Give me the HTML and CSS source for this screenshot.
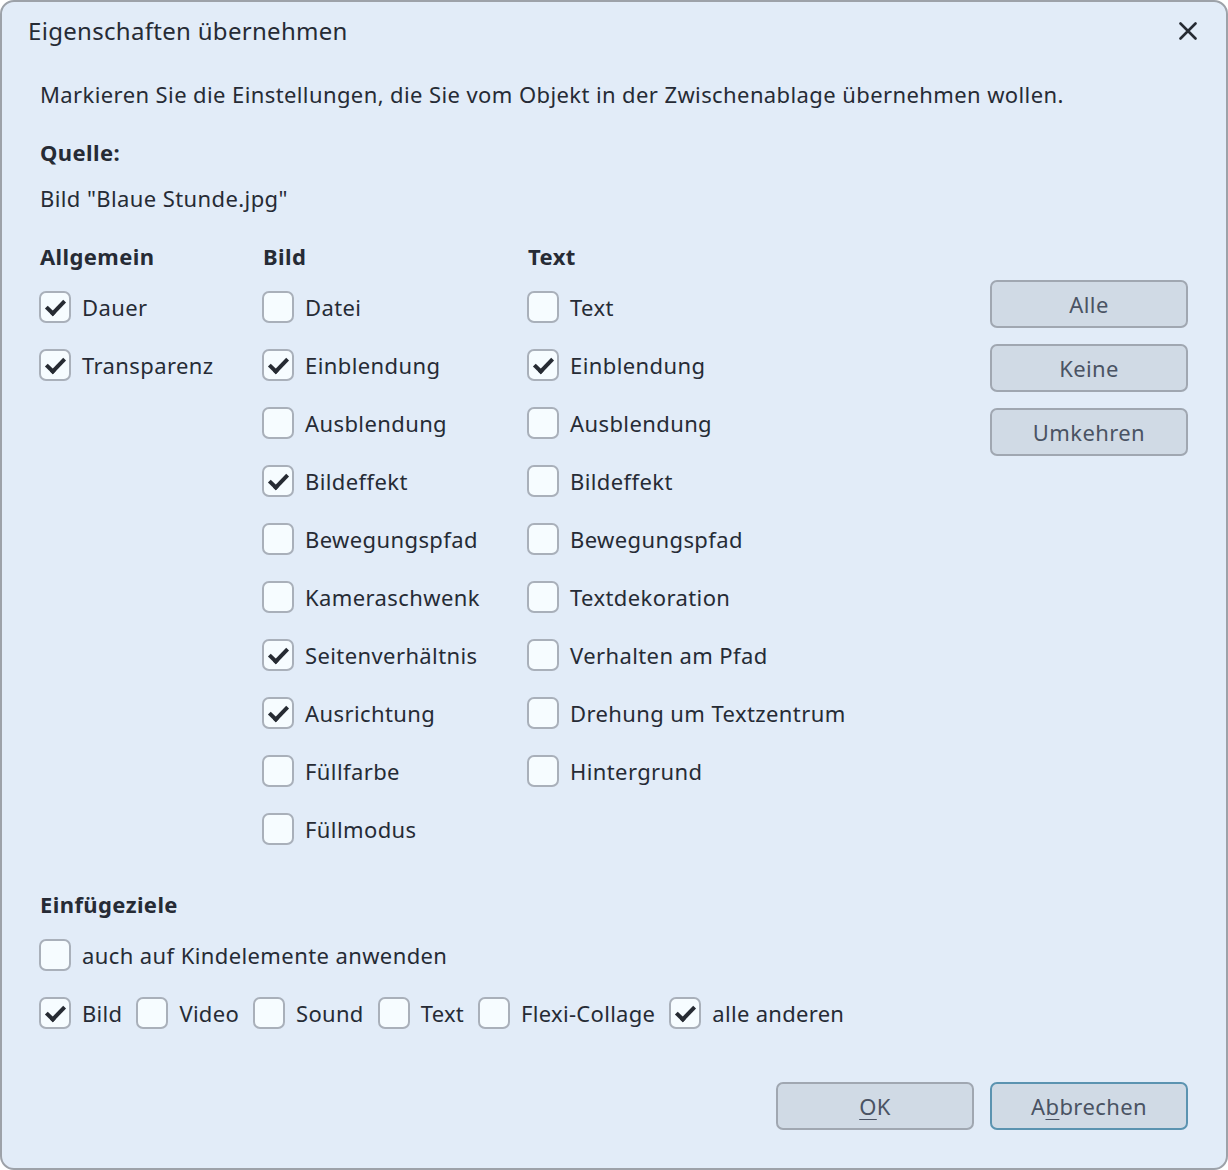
FILE: index.html
```html
<!DOCTYPE html>
<html lang="de">
<head>
<meta charset="utf-8">
<title>Eigenschaften übernehmen</title>
<link rel="stylesheet" href="styles.css">
</head>
<body>
<div class="dialog">
  <div class="titlebar">
    <span class="title">Eigenschaften übernehmen</span>
    <span class="close"><svg width="18" height="18" viewBox="0 0 18 18"><path d="M1.5 1.5 L16.5 16.5 M16.5 1.5 L1.5 16.5" stroke="#262b33" stroke-width="2.6" stroke-linecap="round"/></svg></span>
  </div>
  <div class="content">
    <p class="intro">Markieren Sie die Einstellungen, die Sie vom Objekt in der Zwischenablage übernehmen wollen.</p>
    <p class="label-bold quelle">Quelle:</p>
    <p class="source">Bild "Blaue Stunde.jpg"</p>

    <div class="grid">
      <div class="col">
        <div class="col-head">Allgemein</div>
        <div class="list">
          <label class="cb"><span class="box on"></span>Dauer</label>
          <label class="cb"><span class="box on"></span>Transparenz</label>
        </div>
      </div>
      <div class="col">
        <div class="col-head">Bild</div>
        <div class="list">
          <label class="cb"><span class="box"></span>Datei</label>
          <label class="cb"><span class="box on"></span>Einblendung</label>
          <label class="cb"><span class="box"></span>Ausblendung</label>
          <label class="cb"><span class="box on"></span>Bildeffekt</label>
          <label class="cb"><span class="box"></span>Bewegungspfad</label>
          <label class="cb"><span class="box"></span>Kameraschwenk</label>
          <label class="cb"><span class="box on"></span>Seitenverhältnis</label>
          <label class="cb"><span class="box on"></span>Ausrichtung</label>
          <label class="cb"><span class="box"></span>Füllfarbe</label>
          <label class="cb"><span class="box"></span>Füllmodus</label>
        </div>
      </div>
      <div class="col">
        <div class="col-head">Text</div>
        <div class="list">
          <label class="cb"><span class="box"></span>Text</label>
          <label class="cb"><span class="box on"></span>Einblendung</label>
          <label class="cb"><span class="box"></span>Ausblendung</label>
          <label class="cb"><span class="box"></span>Bildeffekt</label>
          <label class="cb"><span class="box"></span>Bewegungspfad</label>
          <label class="cb"><span class="box"></span>Textdekoration</label>
          <label class="cb"><span class="box"></span>Verhalten am Pfad</label>
          <label class="cb"><span class="box"></span>Drehung um Textzentrum</label>
          <label class="cb"><span class="box"></span>Hintergrund</label>
        </div>
      </div>
      <div class="side-buttons">
        <button class="btn">Alle</button>
        <button class="btn">Keine</button>
        <button class="btn">Umkehren</button>
      </div>
    </div>

    <div class="col-head targets-head">Einfügeziele</div>
    <div class="targets">
      <label class="cb"><span class="box"></span>auch auf Kindelemente anwenden</label>
      <div class="inline-row">
        <label class="cb"><span class="box on"></span>Bild</label>
        <label class="cb"><span class="box"></span>Video</label>
        <label class="cb"><span class="box"></span>Sound</label>
        <label class="cb"><span class="box"></span>Text</label>
        <label class="cb"><span class="box"></span>Flexi-Collage</label>
        <label class="cb"><span class="box on"></span>alle anderen</label>
      </div>
    </div>

    <div class="footer">
      <button class="btn"><u>O</u>K</button>
      <button class="btn primary">A<u>b</u>brechen</button>
    </div>
  </div>
</div>
</body>
</html>
```
FILE: styles.css
```css
html, body {
  margin: 0;
  padding: 0;
  background: #ffffff;
}
body {
  font-family: "Noto Sans", "Open Sans", sans-serif;
  color: #262b35;
  font-size: 22px;
  letter-spacing: 0.4px;
}
.dialog {
  width: 1228px;
  height: 1170px;
  box-sizing: border-box;
  border: 2px solid #9da2a9;
  border-radius: 14px;
  background: #e2ecf8;
  display: flex;
  flex-direction: column;
  overflow: hidden;
}
.titlebar {
  height: 58px;
  display: flex;
  align-items: center;
  justify-content: space-between;
  padding: 0 29px 0 26px;
  flex: none;
}
.title {
  font-size: 24px;
  letter-spacing: 0.3px;
  line-height: 30px;
}
.close {
  display: flex;
  width: 18px;
  height: 18px;
}
.content {
  padding: 1px 38px 0 37px;
  display: flex;
  flex-direction: column;
}
p {
  margin: 0;
  line-height: 30px;
  padding-left: 1px;
}
.intro {
  margin-top: 18px;
}
.label-bold {
  font-weight: 700;
}
.quelle {
  margin-top: 28px;
}
.source {
  margin-top: 16px;
}
.grid {
  margin-top: 28px;
  display: grid;
  grid-template-columns: 223px 265px 1fr 198px;
}
.col-head {
  font-weight: 700;
  line-height: 30px;
  height: 30px;
  padding-left: 1px;
}
.list {
  margin-top: 20px;
  display: flex;
  flex-direction: column;
  gap: 26px;
}
.cb {
  display: flex;
  align-items: center;
  height: 32px;
  line-height: 32px;
  white-space: nowrap;
}
.box {
  width: 32px;
  height: 32px;
  box-sizing: border-box;
  border: 2px solid #a9b0ba;
  border-radius: 7px;
  background: #f6fcff;
  margin-right: 11px;
  flex: none;
  position: relative;
}
.box.on::after {
  content: "";
  position: absolute;
  left: 9px;
  top: 3px;
  width: 7px;
  height: 15px;
  border-right: 4px solid #262b33;
  border-bottom: 4px solid #262b33;
  transform: rotate(44deg);
}
.side-buttons {
  margin-top: 39px;
  display: flex;
  flex-direction: column;
  gap: 16px;
}
.btn {
  width: 198px;
  height: 48px;
  box-sizing: border-box;
  border: 2px solid #a0a7b1;
  border-radius: 7px;
  background: #d0dae5;
  color: #4a5363;
  font-family: "Noto Sans", "Open Sans", sans-serif;
  font-size: 22px;
  letter-spacing: 0.4px;
  padding: 0;
  line-height: 44px;
}
.btn.primary {
  border-color: #5b93b0;
}
.btn u {
  text-underline-offset: 4px;
  text-decoration-thickness: 1px;
}
.targets-head {
  margin-top: 44px;
}
.targets {
  margin-top: 20px;
  display: flex;
  flex-direction: column;
  gap: 26px;
}
.inline-row {
  display: flex;
  gap: 14px;
  letter-spacing: 0.3px;
}
.footer {
  margin-top: 53px;
  display: flex;
  justify-content: flex-end;
  gap: 16px;
}
```
